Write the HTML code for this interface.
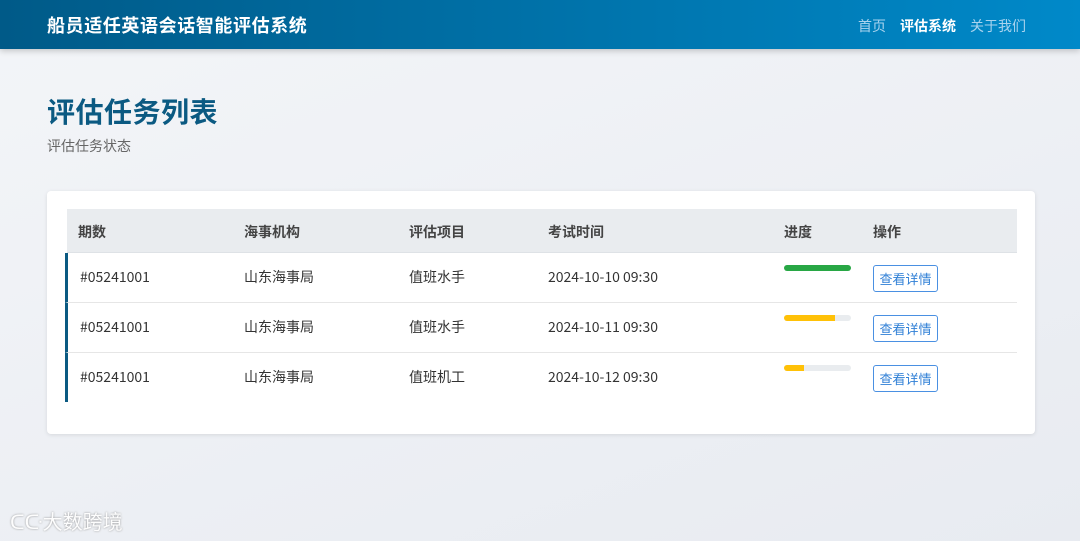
<!DOCTYPE html>
<html><head><meta charset="utf-8"><style>
*{margin:0;padding:0;box-sizing:border-box}
body{width:1080px;height:541px;overflow:hidden;font-family:"Noto Sans CJK SC",sans-serif;background:linear-gradient(160deg,#f3f5f8,#e8ebf1);position:relative}
.hd{height:49px;background:linear-gradient(90deg,#005a88,#0089c9);box-shadow:0 2px 6px rgba(0,0,0,.2);position:relative}
.hd .t{position:absolute;left:47px;top:12px;color:#fff;font-size:18px;font-weight:bold;line-height:26px;letter-spacing:.6px}
.nav{position:absolute;left:858px;top:15px;font-size:14px;color:#a9d3ee;line-height:22px}
.nav span{margin-right:14px}.nav .a{color:#fff;font-weight:bold}
h1{position:absolute;left:47px;top:91px;font-size:28px;line-height:40px;color:#0b5a82;font-weight:bold;letter-spacing:.5px}
.sub{position:absolute;left:47px;top:136px;font-size:14px;line-height:20px;color:#666}
.card{position:absolute;left:47px;top:191px;width:988px;height:243px;background:#fff;border-radius:4px;box-shadow:0 1px 4px rgba(0,0,0,.1)}
.th{position:absolute;left:20px;top:18px;width:950px;height:44px;background:#e9ecef;border-bottom:1px solid #dee2e6}
.c{position:absolute;font-size:14px;color:#333;line-height:20px}
.th .c{top:13px;font-weight:bold;color:#444}
.row{position:absolute;left:18px;width:952px;height:50px;border-left:3px solid #0b5a82;border-bottom:1px solid #e6e6e6}
.row .c{top:14px}
.bar{position:absolute;left:716px;top:12px;width:67px;height:6px;border-radius:3px;background:#e9ecef;overflow:hidden}
.bar i{display:block;height:100%}
.btn{position:absolute;left:805px;top:12px;width:65px;height:27px;border:1px solid #4a90e2;border-radius:3px;color:#2f7fd6;font-size:13px;text-align:center;line-height:25px}
.wm{position:absolute;left:10px;top:506px;color:#fff;font-size:20px;text-shadow:0 0 2px #888;opacity:.9}
</style></head><body>
<div class="hd"><div class="t">船员适任英语会话智能评估系统</div>
<div class="nav"><span>首页</span><span class="a">评估系统</span><span>关于我们</span></div></div>
<h1>评估任务列表</h1><div class="sub">评估任务状态</div>
<div class="card">
<div class="th"><div class="c" style="left:11px">期数</div><div class="c" style="left:177px">海事机构</div><div class="c" style="left:342px">评估项目</div><div class="c" style="left:481px">考试时间</div><div class="c" style="left:717px">进度</div><div class="c" style="left:806px">操作</div></div>
<div class="row" style="top:62px"><div class="c" style="left:12px">#05241001</div><div class="c" style="left:176px">山东海事局</div><div class="c" style="left:341px">值班水手</div><div class="c" style="left:480px">2024-10-10 09:30</div><div class="bar"><i style="width:100%;background:#28a745"></i></div><div class="btn">查看详情</div></div>
<div class="row" style="top:112px"><div class="c" style="left:12px">#05241001</div><div class="c" style="left:176px">山东海事局</div><div class="c" style="left:341px">值班水手</div><div class="c" style="left:480px">2024-10-11 09:30</div><div class="bar"><i style="width:76%;background:#ffc107"></i></div><div class="btn">查看详情</div></div>
<div class="row" style="top:162px;height:49px;border-bottom:none"><div class="c" style="left:12px">#05241001</div><div class="c" style="left:176px">山东海事局</div><div class="c" style="left:341px">值班机工</div><div class="c" style="left:480px">2024-10-12 09:30</div><div class="bar"><i style="width:30%;background:#ffc107"></i></div><div class="btn">查看详情</div></div>
</div>
<div class="wm">ᑕᑢ大数跨境</div>
</body></html>
